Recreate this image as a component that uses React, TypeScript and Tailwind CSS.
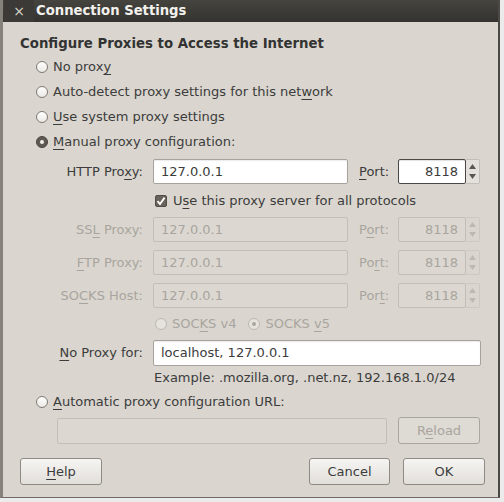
import React from "react";

const txt = "text-[#3c3c3c]";
const dim = "text-[#a9a59e]";

function U({ children }: { children: React.ReactNode }) {
  return <span className="underline underline-offset-[3px] decoration-1">{children}</span>;
}

function Radio({ checked, disabled }: { checked?: boolean; disabled?: boolean }) {
  if (checked && !disabled) {
    return (
      <span className="w-[12px] h-[12px] rounded-full bg-[#5f5952] border border-[#4a4540] flex items-center justify-center shrink-0">
        <span className="w-[4px] h-[4px] rounded-full bg-[#f4f2ee]" />
      </span>
    );
  }
  return (
    <span
      className={
        "w-[12px] h-[12px] rounded-full border flex items-center justify-center shrink-0 " +
        (disabled
          ? "border-[#bcb8b1] bg-[#e6e3de]"
          : "border-[#7e7973] bg-gradient-to-b from-[#ffffff] to-[#ebe9e5]")
      }
    >
      {checked && <span className="w-[4px] h-[4px] rounded-full bg-[#aaa69f]" />}
    </span>
  );
}

function Field({
  value,
  width,
  disabled,
  right,
  focus,
  h = "h-[25px]",
}: {
  value: string;
  width: string;
  disabled?: boolean;
  right?: boolean;
  focus?: boolean;
  h?: string;
}) {
  return (
    <div
      className={
        `${width} ${h} flex items-center px-[7px] rounded-[2px] border ` +
        (right ? "justify-end " : "") +
        (disabled
          ? "border-[#c3bfb8] bg-[#dcd8d1] text-[#a9a59e]"
          : focus
          ? "border-[#4a4744] bg-white text-[#3c3c3c] shadow-[inset_0_1px_1px_rgba(0,0,0,0.12)]"
          : "border-[#a7a39c] bg-white text-[#3c3c3c] shadow-[inset_0_1px_1px_rgba(0,0,0,0.08)]")
      }
    >
      {value}
    </div>
  );
}

function Spinner({ disabled, focus }: { disabled?: boolean; focus?: boolean }) {
  const arrow = disabled ? "#bdb9b2" : "#5a5650";
  return (
    <div className="flex h-[25px]">
      <Field value="8118" width="w-[68px]" right disabled={disabled} focus={focus} />
      <div
        className={
          "w-[14px] h-[25px] flex flex-col items-center justify-center gap-[5px] border-r border-y rounded-r-[2px] " +
          (disabled ? "border-[#cdc9c2]" : "border-[#c3bfb8] bg-[#e4e1dc]")
        }
      >
        <svg width="7" height="5" viewBox="0 0 7 5">
          <path d="M3.5 0 L7 5 L0 5 Z" fill={arrow} />
        </svg>
        <svg width="7" height="5" viewBox="0 0 7 5">
          <path d="M0 0 L7 0 L3.5 5 Z" fill={arrow} />
        </svg>
      </div>
    </div>
  );
}

function Button({
  children,
  width,
  disabled,
}: {
  children: React.ReactNode;
  width: string;
  disabled?: boolean;
}) {
  return (
    <div
      className={
        `${width} h-[27px] flex items-center justify-center rounded-[3px] border ` +
        (disabled
          ? "border-[#aaa69f] bg-[#dedad4] text-[#a9a59e]"
          : "border-[#8e8a83] bg-gradient-to-b from-[#f6f5f3] to-[#e2dfda] text-[#3c3c3c]")
      }
    >
      {children}
    </div>
  );
}

function ProxyRow({
  label,
  disabled,
  focus,
  port,
}: {
  label: React.ReactNode;
  disabled?: boolean;
  focus?: boolean;
  port: React.ReactNode;
}) {
  return (
    <div className="flex items-center h-[25px]">
      <div className={`w-[86px] text-right ${disabled ? dim : txt}`}>{label}</div>
      <div className="ml-[10px]">
        <Field value="127.0.0.1" width="w-[195px]" disabled={disabled} />
      </div>
      <div className={`ml-[11px] w-[39px] ${disabled ? dim : txt}`}>{port}</div>
      <Spinner disabled={disabled} focus={focus} />
    </div>
  );
}

export default function App() {
  return (
    <div className="w-[504px] h-[502px] bg-[#ebebeb] overflow-hidden font-['DejaVu_Sans',sans-serif] text-[13px] leading-[18px]">
      <div className="w-[500px] h-[498px] flex flex-col border-l-[3px] border-l-[#85817b] border-r-2 border-r-[#4b4945] border-b border-b-[#6d6a65] bg-[#dad6cf]">
        <div className="h-[22px] flex items-center bg-gradient-to-b from-[#45443f] to-[#34332f] text-[#f2f1ed] font-bold">
          <div className="w-[30px] h-[22px] flex items-center justify-center bg-[#3b3a36] ml-[1px] text-[#d8d5ce] text-[14px] font-normal">
            ×
          </div>
          <div className="ml-[2px] text-[13.2px]">Connection Settings</div>
        </div>

        <div className={`flex-1 flex flex-col ${txt}`}>
          <div className="mt-[13px] ml-[17px] font-bold text-[13.3px] text-[#333333]">
            Configure Proxies to Access the Internet
          </div>

          <div className="mt-[1px] ml-[33px] flex flex-col">
            <div className="h-[25px] flex items-center gap-[5px]">
              <Radio />
              <span>
                No prox<U>y</U>
              </span>
            </div>
            <div className="h-[25px] flex items-center gap-[5px]">
              <Radio />
              <span>
                Auto-detect proxy settings for this net<U>w</U>ork
              </span>
            </div>
            <div className="h-[25px] flex items-center gap-[5px]">
              <Radio />
              <span>
                <U>U</U>se system proxy settings
              </span>
            </div>
            <div className="h-[25px] flex items-center gap-[5px]">
              <Radio checked />
              <span>
                <U>M</U>anual proxy configuration:
              </span>
            </div>
          </div>

          <div className="ml-[54px] mt-[5px] flex flex-col">
            <ProxyRow
              label={
                <>
                  HTTP Pro<U>x</U>y:
                </>
              }
              focus
              port={
                <>
                  <U>P</U>ort:
                </>
              }
            />
            <div className="h-[33px] flex items-center pl-[98px] gap-[6px]">
              <span className="w-[12px] h-[12px] rounded-[2px] bg-[#6a635b] border border-[#524c46] flex items-center justify-center">
                <svg width="10" height="10" viewBox="0 0 10 10">
                  <path d="M1.5 5.2 L4 8 L8.6 1.6" stroke="#ffffff" strokeWidth="1.8" fill="none" />
                </svg>
              </span>
              <span>
                U<U>s</U>e this proxy server for all protocols
              </span>
            </div>
            <div className="flex flex-col gap-[8px]">
              <ProxyRow
                disabled
                label={
                  <>
                    SS<U>L</U> Proxy:
                  </>
                }
                port={
                  <>
                    P<U>o</U>rt:
                  </>
                }
              />
              <ProxyRow
                disabled
                label={
                  <>
                    <U>F</U>TP Proxy:
                  </>
                }
                port={
                  <>
                    Po<U>r</U>t:
                  </>
                }
              />
              <ProxyRow
                disabled
                label={
                  <>
                    SO<U>C</U>KS Host:
                  </>
                }
                port={
                  <>
                    Por<U>t</U>:
                  </>
                }
              />
            </div>
            <div className={`h-[32px] flex items-center pl-[98px] ${dim}`}>
              <Radio disabled />
              <span className="ml-[5px]">
                SOC<U>K</U>S v4
              </span>
              <span className="ml-[12px]">
                <Radio checked disabled />
              </span>
              <span className="ml-[5px]">
                SOCKS <U>v</U>5
              </span>
            </div>
            <div className="flex items-center h-[26px]">
              <div className="w-[86px] text-right">
                <U>N</U>o Proxy for:
              </div>
              <div className="ml-[10px]">
                <Field value="localhost, 127.0.0.1" width="w-[328px]" h="h-[26px]" />
              </div>
            </div>
            <div className="h-[24px] flex items-center pl-[97px]">
              Example: .mozilla.org, .net.nz, 192.168.1.0/24
            </div>
          </div>

          <div className="ml-[33px] h-[23px] flex items-center gap-[5px]">
            <Radio />
            <span>
              <U>A</U>utomatic proxy configuration URL:
            </span>
          </div>

          <div className="ml-[54px] mt-[4px] flex items-center">
            <Field value="" width="w-[330px]" h="h-[26px]" disabled />
            <div className="ml-[11px]">
              <Button width="w-[82px]" disabled>
                <span>
                  R<U>e</U>load
                </span>
              </Button>
            </div>
          </div>

          <div className="mt-[14px] ml-[17px] mr-[13px] flex items-center">
            <Button width="w-[82px]">
              <span>
                <U>H</U>elp
              </span>
            </Button>
            <div className="flex-1" />
            <Button width="w-[81px]">Cancel</Button>
            <div className="ml-[13px]">
              <Button width="w-[82px]">OK</Button>
            </div>
          </div>
        </div>
      </div>
    </div>
  );
}
